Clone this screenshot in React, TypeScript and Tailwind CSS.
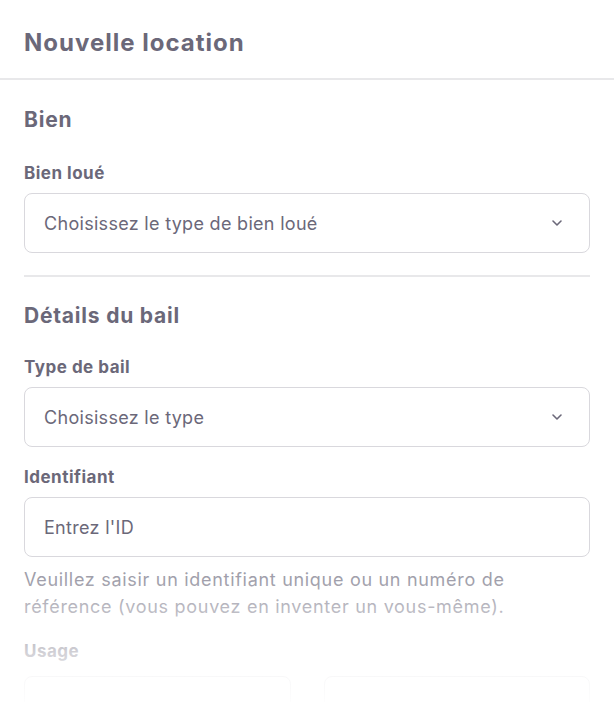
import React from "react";

const font = { fontFamily: "Inter, 'Noto Sans', sans-serif" };

function Chevron() {
  return (
    <svg width="12" height="8" viewBox="0 0 12 8" fill="none" className="shrink-0">
      <path d="M2 2l4 4 4-4" stroke="#6b6879" strokeWidth="1.6" strokeLinecap="round" strokeLinejoin="round" />
    </svg>
  );
}

function SelectBox({ text }: { text: string }) {
  return (
    <div className="mt-2 flex h-[60px] items-center justify-between rounded-lg border-[1.5px] border-[#d9d8dd] bg-white pl-[19px] pr-[26px]">
      <span className="text-[18px] tracking-[0.3px] text-[#6b6879]">{text}</span>
      <Chevron />
    </div>
  );
}

function Label({ children, className }: { children: React.ReactNode; className: string }) {
  return (
    <div className={`text-[17px] font-bold leading-[24px] tracking-[0.5px] text-[#6b6879] ${className}`}>
      {children}
    </div>
  );
}

export default function App() {
  return (
    <div className="relative h-[702px] w-[614px] overflow-hidden bg-white" style={font}>
      <div className="border-b-2 border-[#e8e8ea] px-6 pb-[20px] pt-[28px]">
        <h1 className="text-[24px] font-bold leading-[30px] tracking-[1px] text-[#6b6879]">Nouvelle location</h1>
      </div>
      <div className="px-6">
        <h2 className="pt-[26px] text-[21px] font-bold leading-[28px] tracking-[0.8px] text-[#6b6879]">Bien</h2>
        <Label className="mt-[27px]">Bien loué</Label>
        <SelectBox text="Choisissez le type de bien loué" />
        <div className="mt-[22px] h-[2px] bg-[#e8e8ea]" />
        <h2 className="pt-[25px] text-[21px] font-bold leading-[28px] tracking-[0.8px] text-[#6b6879]">Détails du bail</h2>
        <Label className="mt-[25px]">Type de bail</Label>
        <SelectBox text="Choisissez le type" />
        <Label className="mt-[18px]">Identifiant</Label>
        <div className="mt-2 flex h-[60px] items-center rounded-lg border-[1.5px] border-[#d9d8dd] bg-white pl-[19px]">
          <span className="text-[18px] tracking-[0.3px] text-[#6b6879]">Entrez l'ID</span>
        </div>
        <p className="mt-[9px] text-[18px] leading-[27px] tracking-[0.7px] text-[#a19fab]">
          Veuillez saisir un identifiant unique ou un numéro de
          <br />
          référence (vous pouvez en inventer un vous-même).
        </p>
        <Label className="mt-[19px]">Usage</Label>
        <div className="mt-[13px] grid grid-cols-2 gap-[33px]">
          <div className="flex h-[90px] items-start rounded-lg border-[1.5px] border-[#d9d8dd] p-5">
            <div className="mt-4 h-5 w-5 rounded-full border-[1.5px] border-[#d9d8dd]" />
          </div>
          <div className="flex h-[90px] items-start rounded-lg border-[1.5px] border-[#d9d8dd] p-5">
            <div className="mt-4 h-5 w-5 rounded-full border-[1.5px] border-[#d9d8dd]" />
          </div>
        </div>
      </div>
      <div className="pointer-events-none absolute bottom-0 left-0 right-0 h-[122px] bg-linear-to-b from-white/0 via-white/70 via-60% to-white/95" />
    </div>
  );
}
